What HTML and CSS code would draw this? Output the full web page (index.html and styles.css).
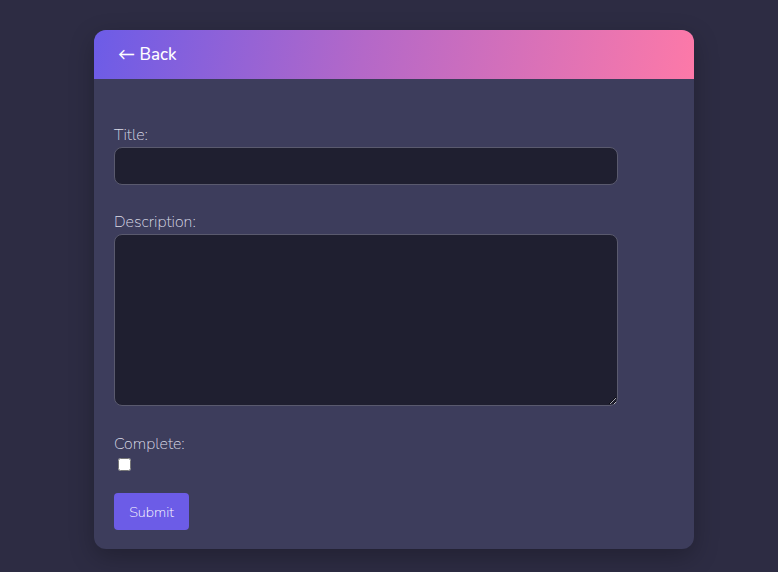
FILE: index.html
```html
<!DOCTYPE html>
<html>
<head>
<meta charset="utf-8">
<link rel="stylesheet" href="styles.css">
</head>
<body>
<div class="card">
  <div class="card-header"><a class="back" href="#">← Back</a></div>
  <form class="card-body">
    <div class="field field-title">
      <label class="label">Title:</label>
      <input class="input" type="text">
    </div>
    <div class="field">
      <label class="label">Description:</label>
      <textarea class="input textarea"></textarea>
    </div>
    <div class="field field-check">
      <label class="label">Complete:</label>
      <input class="check" type="checkbox">
    </div>
    <button class="submit" type="button">Submit</button>
  </form>
</div>
</body>
</html>
```
FILE: styles.css
```css
html, body {
  margin: 0;
  padding: 0;
}
body {
  background: #2d2c43;
  font-family: "Nunito", "Lato", "Open Sans", sans-serif;
  color: #d8d8e4;
  padding: 30px 0 0 10px;
  height: 572px;
  box-sizing: border-box;
}
.card {
  width: 600px;
  margin: 0 auto;
  background: #3d3d5c;
  border-radius: 12px;
  overflow: hidden;
  box-shadow: 0 8px 24px rgba(0,0,0,0.25);
}
.card-header {
  height: 49px;
  background: linear-gradient(100deg, #6c5ce7 0%, #b468c8 45%, #fd79a8 100%);
  display: flex;
  align-items: center;
  padding: 0 24px;
}
.back {
  color: #fff;
  text-decoration: none;
  font-size: 17px;
  font-weight: 500;
}
.card-body {
  padding: 46px 20px 19px;
  display: flex;
  flex-direction: column;
}
.field {
  display: flex;
  flex-direction: column;
  align-items: flex-start;
  margin-bottom: 28px;
}
.field-title {
  margin-bottom: 27px;
}
.label {
  font-size: 16px;
  font-weight: 200;
  color: #dcdce8;
  line-height: 20px;
  margin-bottom: 2px;
}
.input {
  width: 504px;
  height: 38px;
  box-sizing: border-box;
  background: #1f1f30;
  border: 1px solid #5a5a6e;
  border-radius: 8px;
  color: #fff;
  font-family: inherit;
  margin: 0;
}
.textarea {
  height: 172px;
  resize: vertical;
}
.check {
  margin: 2px 0 0 4px;
  width: 13px;
  height: 13px;
}
.field-check {
  margin-bottom: 22px;
}
.submit {
  align-self: flex-start;
  width: 75px;
  height: 37px;
  background: #6c5ce7;
  color: #fff;
  border: none;
  border-radius: 4px;
  font-family: inherit;
  font-size: 14.5px;
  font-weight: 200;
}
```
